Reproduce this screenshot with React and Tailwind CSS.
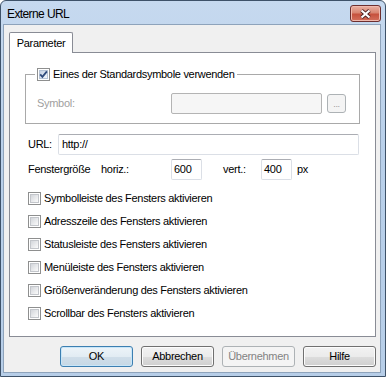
import React from "react";

const font = "font-['Liberation_Sans',Arial,sans-serif]";

function Box({ checked }) {
    return (
        <span className="relative flex h-[13px] w-[13px] shrink-0 items-center justify-center border border-[#8e8f8f] bg-white">
            <span
                className={
                    checked
                        ? "h-[9px] w-[9px] border border-[#b5c3d6] bg-[linear-gradient(135deg,#c4d1e4,#f4f7fb)]"
                        : "h-[9px] w-[9px] border border-[#c3c6cb] bg-[linear-gradient(135deg,#d3d6db,#fbfbfb)]"
                }
            />
            {checked && (
                <svg className="absolute left-0 top-0" width="11" height="11" viewBox="0 0 11 11">
                    <path d="M2.2 5.4 L4.4 7.9 L8.9 2.4" fill="none" stroke="#2f4b7c" strokeWidth="1.8" />
                </svg>
            )}
        </span>
    );
}

function Btn({ label, kind }) {
    if (kind === "default") {
        return (
            <div className="flex h-[21px] w-[73px] items-center justify-center rounded-[3px] border border-[#3c7fb1] bg-[linear-gradient(180deg,#edf4f9_0%,#e2ecf3_50%,#d0dee9_50%,#c6d8e5_100%)] text-black shadow-[inset_0_0_0_1px_#c8e6f8]">
                {label}
            </div>
        );
    }
    if (kind === "disabled") {
        return (
            <div className="flex h-[21px] w-[73px] items-center justify-center rounded-[3px] border border-[#adb2b5] bg-[#f4f4f4] text-[#838383]">
                {label}
            </div>
        );
    }
    return (
        <div className="flex h-[21px] w-[73px] items-center justify-center rounded-[3px] border border-[#707070] bg-[linear-gradient(180deg,#f2f2f2_0%,#ebebeb_50%,#dddddd_50%,#cfcfcf_100%)] text-black shadow-[inset_0_0_0_1px_#fcfcfc]">
            {label}
        </div>
    );
}

export default function App() {
    const optionen = [
        "Symbolleiste des Fensters aktivieren",
        "Adresszeile des Fensters aktivieren",
        "Statusleiste des Fensters aktivieren",
        "Menüleiste des Fensters aktivieren",
        "Größenveränderung des Fensters aktivieren",
        "Scrollbar des Fensters aktivieren"
    ];

    return (
        <div className={`flex h-[377px] w-[386px] flex-col overflow-hidden rounded-t-[6px] border border-[#3e5269] bg-[linear-gradient(180deg,#c6d9ef_0%,#b9d0ea_40%,#b7cee8_100%)] ${font}`}>
            <div className="flex h-[23px] shrink-0 items-start justify-between pl-[6px] pr-[4px]">
                <span className="pt-[5px] text-[12px] leading-[16px] tracking-[-0.6px] text-black">Externe URL</span>
                <div className="mt-[4px] flex h-[17px] w-[31px] items-center justify-center rounded-[3px] border border-[#6d2f2f] bg-[linear-gradient(180deg,#eab0a2_0%,#d98571_45%,#c6513d_55%,#d4705c_100%)] shadow-[inset_0_0_0_1px_#f0b9ad]">
                    <svg width="13" height="10" viewBox="0 0 13 10">
                        <path d="M2.5 1.5 L10.5 8.5 M10.5 1.5 L2.5 8.5" stroke="#4a2020" strokeWidth="3.8" />
                        <path d="M2.5 1.5 L10.5 8.5 M10.5 1.5 L2.5 8.5" stroke="#ffffff" strokeWidth="2.2" />
                    </svg>
                </div>
            </div>

            <div className="mb-[3px] ml-[2px] mr-[4px] flex flex-1 flex-col border border-[#8ea3bb] bg-[#f0f0f0] pt-[7px] text-[11px] tracking-[-0.3px] text-black">
                <div className="relative z-10 -mb-px ml-[5px] flex h-[21px] w-[64px] items-center justify-center rounded-t-[2px] border border-b-0 border-[#898c95] bg-white">
                    Parameter
                </div>

                <div className="ml-[5px] h-[285px] w-[367px] border border-[#898c95] bg-white">
                    <div className="relative mx-[15px] mt-[21px] h-[50px] border border-[#a9a9a9] pl-[11px] pt-[18px]">
                        <div className="absolute left-[9px] top-[-7px] flex items-center gap-[3px] bg-white px-[2px]">
                            <Box checked />
                            <span className="leading-[13px]">Eines der Standardsymbole verwenden</span>
                        </div>
                        <div className="flex items-center">
                            <span className="w-[134px] text-[#a0a0a0]">Symbol:</span>
                            <div className="h-[21px] w-[151px] rounded-[2px] border border-[#b4b4b4] bg-[#f6f6f6]" />
                            <div className="ml-[5px] flex h-[19px] w-[19px] items-end justify-center rounded-[3px] border border-[#adb2b5] bg-[#f4f4f4] pb-[3px] text-[9px] leading-[9px] text-[#9a9a9a]">
                                ...
                            </div>
                        </div>
                    </div>

                    <div className="mt-[10px] flex items-center pl-[18px]">
                        <span className="w-[30px]">URL:</span>
                        <div className="flex h-[21px] w-[301px] items-center rounded-[2px] border border-[#dbdfe6] border-t-[#abadb3] pl-[3px]">
                            http://
                        </div>
                    </div>

                    <div className="mt-[4px] flex items-center pl-[18px]">
                        <span className="w-[73px]">Fenstergröße</span>
                        <span className="w-[70px]">horiz.:</span>
                        <div className="flex h-[21px] w-[31px] items-center rounded-[2px] border border-[#dbdfe6] border-t-[#abadb3] pl-[2px]">
                            600
                        </div>
                        <span className="ml-[21px] w-[38px]">vert.:</span>
                        <div className="flex h-[21px] w-[31px] items-center rounded-[2px] border border-[#dbdfe6] border-t-[#abadb3] pl-[2px]">
                            400
                        </div>
                        <span className="ml-[5px]">px</span>
                    </div>

                    <div className="mt-[7px] flex flex-col pl-[18px]">
                        {optionen.map((item) => (
                            <div key={item} className="flex h-[23px] items-center gap-[3px]">
                                <Box />
                                <span>{item}</span>
                            </div>
                        ))}
                    </div>
                </div>

                <div className="mr-[4px] mt-[9px] flex justify-end gap-[8px]">
                    <Btn label="OK" kind="default" />
                    <Btn label="Abbrechen" />
                    <Btn label="Übernehmen" kind="disabled" />
                    <Btn label="Hilfe" />
                </div>
            </div>
        </div>
    );
}
